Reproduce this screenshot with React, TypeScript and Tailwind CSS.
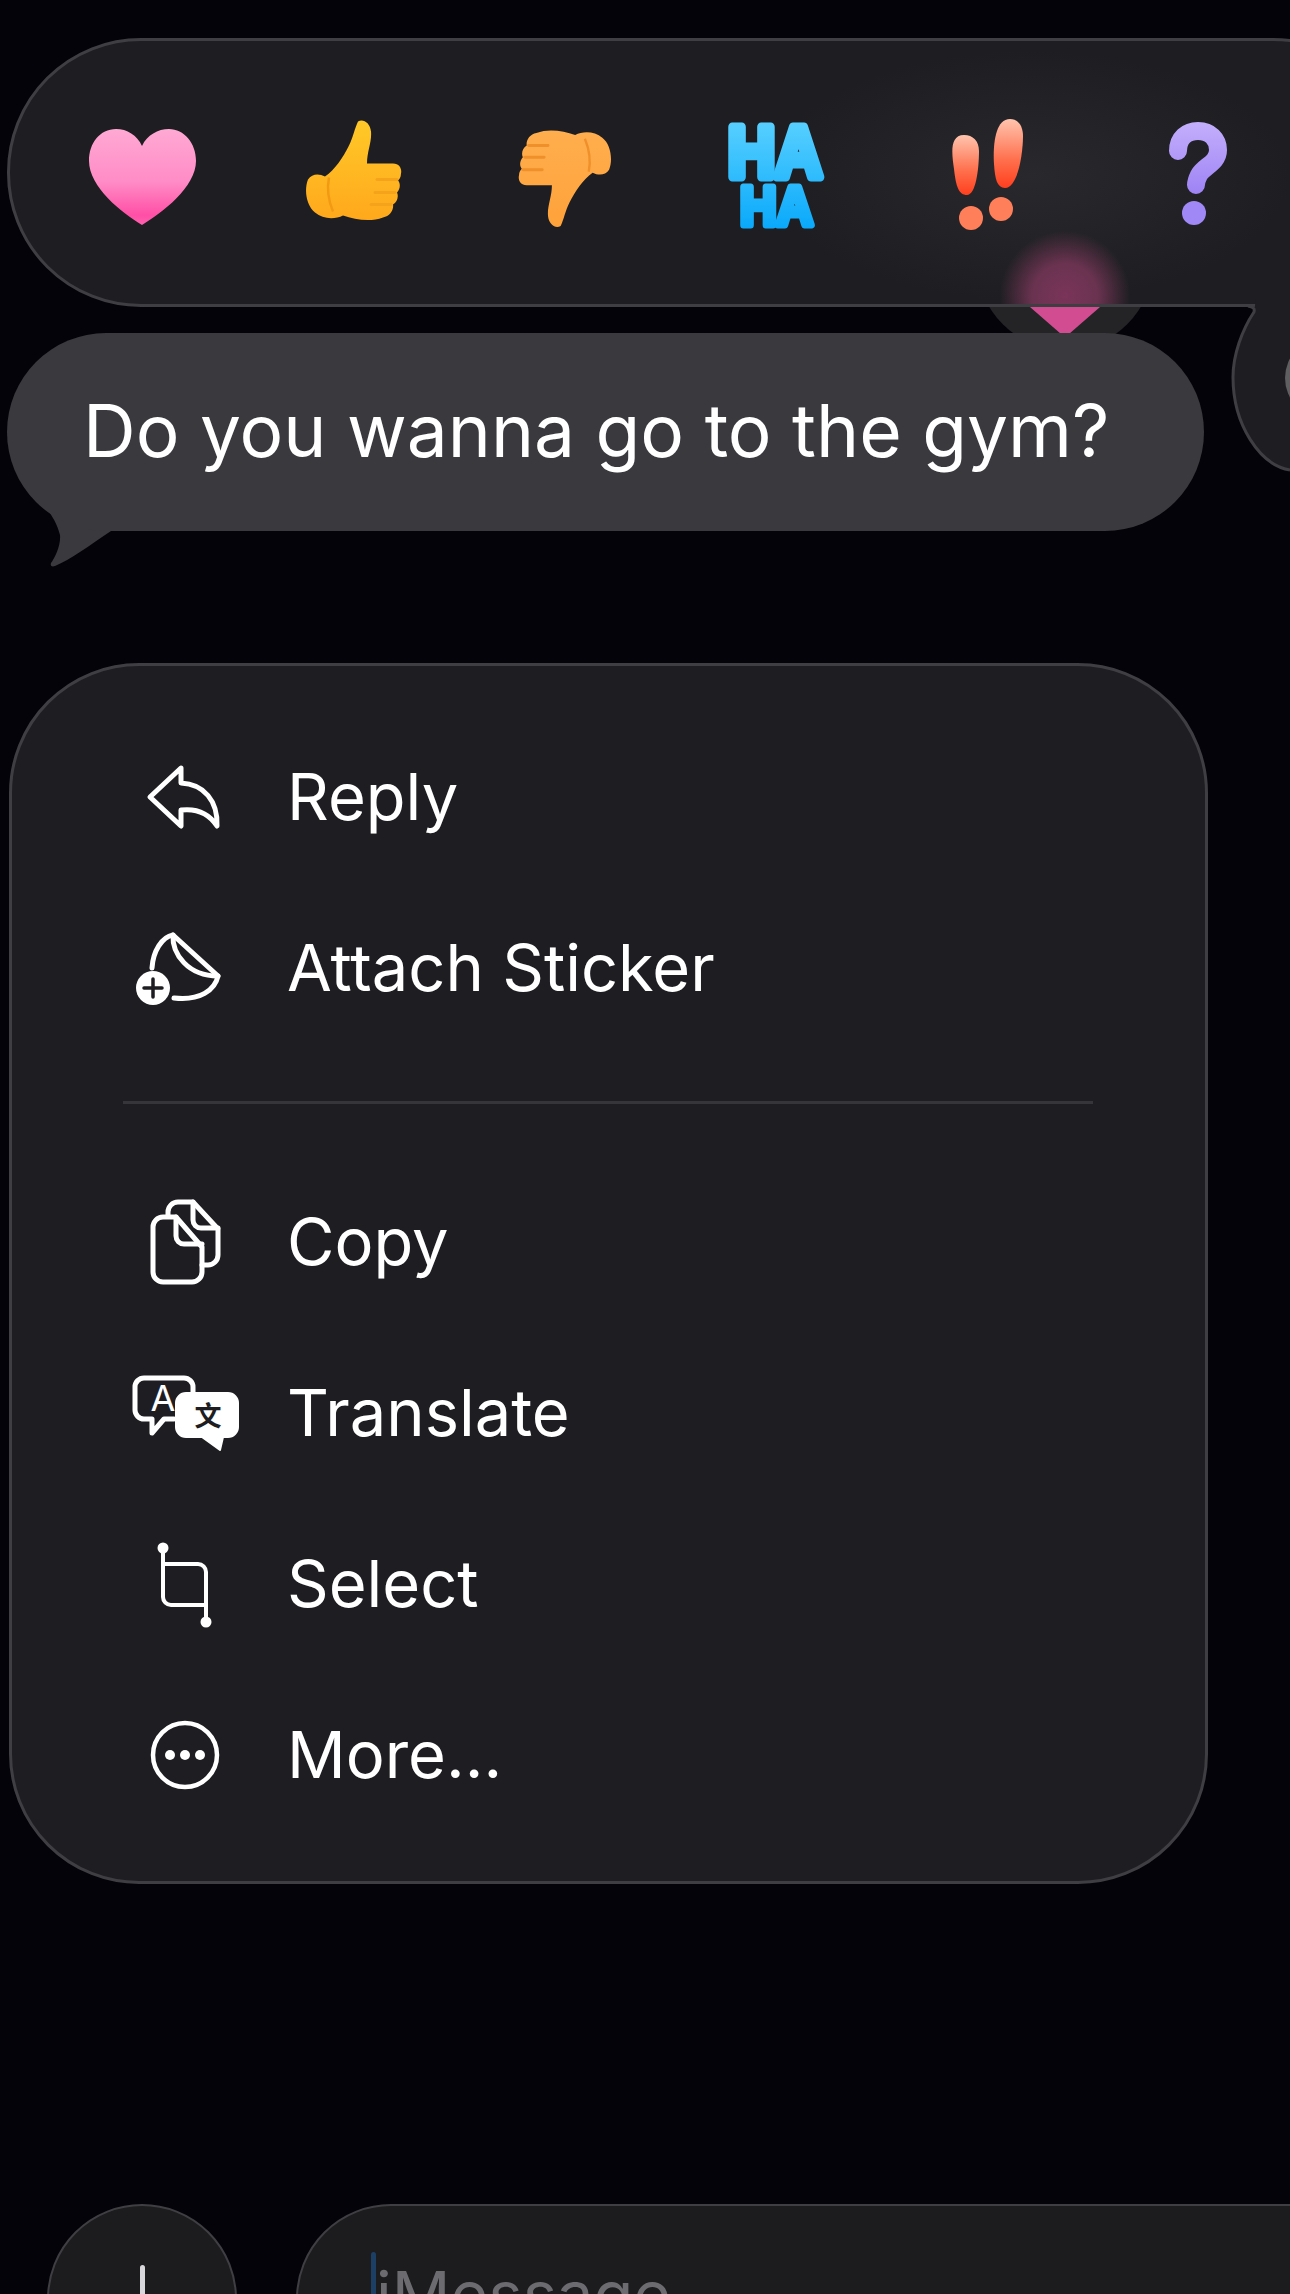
import type { ReactNode } from "react";

const font = { fontFamily: "Inter, 'Noto Sans', sans-serif" };

// reaction emojis -------------------------------------------------
const HAND =
  "M53 2 C58 -1 65 3 66 12 C67 22 62 32 62 44 L88 44 C95 44 97 50 96 54 C96 58 94 60 93 61 C96 64 95 70 92 73 C94 77 92 83 88 85 C89 90 85 97 78 98 C65 103 50 100 38 96 C30 100 18 100 10 93 C1 86 -1 70 3 60 C7 54 14 54 20 57 C30 50 38 38 44 26 C48 18 50 8 53 2Z";

const Heart = () => (
  <svg width="107" height="96" viewBox="0 0 107 96" className="mt-[8px]">
    <defs>
      <linearGradient id="heartFill" x1="0" y1="0" x2="0" y2="1">
        <stop offset="0" stopColor="#ffa9d4" />
        <stop offset="0.55" stopColor="#ff8cc6" />
        <stop offset="0.9" stopColor="#ff4fa6" />
        <stop offset="1" stopColor="#ff62b0" />
      </linearGradient>
    </defs>
    <path
      d="M53 17 C48 6 38 0 27 0 C11 0 0 14 0 32 C0 58 33 84 53 96 C73 84 107 58 107 32 C107 14 95 0 80 0 C69 0 58 6 53 17 Z"
      fill="url(#heartFill)"
    />
  </svg>
);

const ThumbUp = () => (
  <svg width="97" height="105" viewBox="0 0 97 102" className="mb-[4px]">
    <defs>
      <linearGradient id="thumbFill" x1="0" y1="0" x2="0" y2="1">
        <stop offset="0" stopColor="#ffc928" />
        <stop offset="1" stopColor="#ffa81c" />
      </linearGradient>
    </defs>
    <path d={HAND} fill="url(#thumbFill)" />
    <path d="M24 58 C22 68 23 80 28 92" stroke="#f29a14" strokeWidth="2.5" fill="none" />
    <path d="M72 60 H92 M70 73 H90 M66 85 H86" stroke="#f5a31a" strokeWidth="3" strokeLinecap="round" fill="none" />
  </svg>
);

const ThumbDown = () => (
  <svg width="94" height="103" viewBox="0 0 97 102" className="mt-[12px] rotate-180">
    <defs>
      <linearGradient id="downFill" x1="0" y1="0" x2="0" y2="1">
        <stop offset="0" stopColor="#ffa23a" />
        <stop offset="1" stopColor="#ffae4e" />
      </linearGradient>
    </defs>
    <path d={HAND} fill="url(#downFill)" />
    <path d="M24 58 C22 68 23 80 28 92" stroke="#f0902a" strokeWidth="2.5" fill="none" />
    <path d="M72 60 H92 M70 73 H90 M66 85 H86" stroke="#f0902a" strokeWidth="3" strokeLinecap="round" fill="none" />
  </svg>
);

const HaHa = () => (
  <svg width="106" height="150" viewBox="0 0 106 150" className="mt-[6px]">
    <defs>
      <linearGradient id="hahaFill" gradientUnits="userSpaceOnUse" x1="0" y1="20" x2="0" y2="130">
        <stop offset="0" stopColor="#58d0ff" />
        <stop offset="1" stopColor="#08a8fb" />
      </linearGradient>
    </defs>
    <g
      fill="url(#hahaFill)"
      stroke="url(#hahaFill)"
      strokeLinejoin="round"
      fontFamily="'Liberation Sans', sans-serif"
      fontWeight="700"
    >
      <text x="5" y="76" fontSize="72" strokeWidth="9" textLength="94" lengthAdjust="spacingAndGlyphs">
        HA
      </text>
      <text x="17" y="124" fontSize="56" strokeWidth="7" textLength="73" lengthAdjust="spacingAndGlyphs">
        HA
      </text>
    </g>
  </svg>
);

const Bang = () => (
  <svg width="73" height="111" viewBox="0 0 73 111" className="mt-[4px]">
    <defs>
      <linearGradient id="bangFill" x1="0" y1="0" x2="0" y2="1">
        <stop offset="0" stopColor="#ffc4ae" />
        <stop offset="0.6" stopColor="#ff6f4c" />
        <stop offset="1" stopColor="#ff3f1e" />
      </linearGradient>
    </defs>
    <path d="M14 16 C23 16 29 22 29 32 C29 50 26 76 17 76 C9 76 6 68 4 50 C2 36 -1 16 14 16Z" fill="url(#bangFill)" />
    <path d="M60 0 C69 0 73 8 73 17 C73 34 68 69 55 69 C47 69 45 60 44 45 C43 30 44 0 60 0Z" fill="url(#bangFill)" />
    <circle cx="21" cy="99" r="12" fill="#ff7f5a" />
    <circle cx="51" cy="90" r="12" fill="#ff7f5a" />
  </svg>
);

const Question = () => (
  <svg width="59" height="103" viewBox="0 0 59 103" className="mt-[2px]">
    <defs>
      <linearGradient id="questionFill" gradientUnits="userSpaceOnUse" x1="0" y1="0" x2="0" y2="100">
        <stop offset="0" stopColor="#c3affc" />
        <stop offset="1" stopColor="#8f72f2" />
      </linearGradient>
    </defs>
    <path
      d="M10 29 C10 16 19 9 30 9 C42 9 50 17 50 28 C50 41 36 44 31 53 C29 57 28 60 28 63"
      stroke="url(#questionFill)"
      strokeWidth="18"
      strokeLinecap="round"
      fill="none"
    />
    <circle cx="26" cy="91" r="12" fill="#a088f6" />
  </svg>
);

// menu icons, all on a 110x90 box ----------------------------------
const icon = (children: ReactNode) => (
  <svg
    width="110"
    height="90"
    viewBox="0 0 110 90"
    fill="none"
    stroke="#fff"
    strokeLinecap="round"
    strokeLinejoin="round"
    className="shrink-0 overflow-visible"
  >
    {children}
  </svg>
);

const ReplyIcon = () =>
  icon(<path strokeWidth="5" d="M51 15 L20 44 L51 73 V57 C68 55 80 62 87 73 C88 48 74 31 51 30 Z" />);

const StickerIcon = () =>
  icon(
    <>
      <path strokeWidth="5" d="M22 44 C23 27 32 13 43 11 L88 52 C85 66 70 77 44 74" />
      <path strokeWidth="5" d="M43 11 C42 30 58 52 88 52" />
      <circle cx="23" cy="64" r="17" fill="#fff" stroke="none" />
      <path strokeWidth="3.5" stroke="#1e1e22" d="M23 55 V73 M14 64 H32" />
    </>,
  );

const CopyIcon = () =>
  icon(
    <g strokeWidth="5">
      <path d="M33 19 H46 L72 49 V74 A10 10 0 0 1 62 84 H33 A10 10 0 0 1 23 74 V29 A10 10 0 0 1 33 19 Z" />
      <path d="M46 19 V38 A8 8 0 0 0 54 46 H72" />
      <path d="M38 17 V14 A10 10 0 0 1 48 4 H63 L88 31 V57 A10 10 0 0 1 78 67 H72" />
      <path d="M63 4 V22 A8 8 0 0 0 71 30 H88" />
    </g>,
  );

const TranslateIcon = () =>
  icon(
    <>
      <path
        strokeWidth="5"
        d="M63 24 V18 A9 9 0 0 0 54 9 H14 A9 9 0 0 0 5 18 V41 A9 9 0 0 0 14 50 H22 V64 L34 50 H44"
      />
      <text
        x="33"
        y="42"
        fill="#fff"
        stroke="none"
        fontSize="36"
        textAnchor="middle"
        fontFamily="Inter, sans-serif"
      >
        A
      </text>
      <path
        fill="#fff"
        strokeWidth="2"
        d="M56 24 H98 A10 10 0 0 1 108 34 V58 A10 10 0 0 1 98 68 H93 L90 81 L72 68 H56 A10 10 0 0 1 46 58 V34 A10 10 0 0 1 56 24 Z"
      />
      <text
        x="78"
        y="57"
        fill="#1e1e22"
        stroke="none"
        fontSize="27"
        fontWeight="700"
        textAnchor="middle"
        fontFamily="'Noto Sans CJK SC', sans-serif"
      >
        文
      </text>
    </>,
  );

const SelectIcon = () =>
  icon(
    <>
      <path strokeWidth="4" d="M33 8 V57 A8 8 0 0 0 41 65 H76 M33 24 H68 A8 8 0 0 1 76 32 V82" />
      <circle cx="33" cy="8" r="5.5" fill="#fff" stroke="none" />
      <circle cx="76" cy="82" r="5.5" fill="#fff" stroke="none" />
    </>,
  );

const MoreIcon = () =>
  icon(
    <>
      <circle cx="55" cy="44" r="32" strokeWidth="4.5" />
      <circle cx="40" cy="44" r="5" fill="#fff" stroke="none" />
      <circle cx="55" cy="44" r="5" fill="#fff" stroke="none" />
      <circle cx="70" cy="44" r="5" fill="#fff" stroke="none" />
    </>,
  );

const MenuRow = ({ label, children }: { label: string; children: ReactNode }) => (
  <div className="flex h-[171px] items-center">
    {children}
    <span className="mb-[3px] ml-[47px] text-[65px] leading-none text-white">{label}</span>
  </div>
);

export default function App() {
  return (
    <div
      style={font}
      className="flex h-[2294px] w-[1290px] flex-col overflow-hidden bg-[#030309] pt-[38px]"
    >
      {/* reactions bar */}
      <div className="relative ml-[7px] h-[269px] w-[1400px] shrink-0">
        <div className="relative flex h-full items-center overflow-hidden rounded-[134px] border-[3px] border-[#3f3f43] bg-[#1e1e22] pl-[27px]">
          <div className="absolute left-[760px] top-[10px] h-[250px] w-[520px] bg-[radial-gradient(closest-side,#29282c_0%,#29282c00_100%)]" />
          <div className="absolute left-[990px] top-[190px] h-[130px] w-[130px] bg-[radial-gradient(closest-side,#7a3459_0%,#6a3350_50%,#6a335000_100%)]" />
          {[<Heart />, <ThumbUp />, <ThumbDown />, <HaHa />, <Bang />, <Question />].map((emoji, i) => (
            <div key={i} className="relative flex w-[211px] shrink-0 justify-center">
              {emoji}
            </div>
          ))}
        </div>
        {/* tail running to the next reaction */}
        <svg width="70" height="200" viewBox="0 0 70 200" className="absolute left-[1213px] top-[257px]">
          <path d="M36 4 H70 V175 C40 170 13 130 13 82 C13 60 22 35 34 17 Z" fill="#1e1e22" />
          <path
            d="M70 175 C40 170 13 130 13 82 C13 60 22 35 34 17 C35 13 33 12 28 11"
            fill="none"
            stroke="#3f3f43"
            strokeWidth="3"
          />
          <circle cx="105" cy="83" r="40" fill="#5f5f62" />
        </svg>
      </div>

      {/* message bubble */}
      <div className="relative ml-[7px] mt-[26px] h-[198px] w-[1197px] shrink-0">
        <div className="absolute left-[970px] top-[-26px] h-[30px] w-[176px] overflow-hidden">
          <div className="absolute left-0 top-[-133px] h-[176px] w-[176px] rounded-full bg-[#242427]" />
          <svg width="176" height="30" viewBox="0 0 176 30" className="absolute left-0 top-0">
            <path d="M53 0 H123 L92 27 Q88 30 84 27 Z" fill="#d24c92" />
          </svg>
        </div>
        <svg width="90" height="90" viewBox="0 0 90 90" className="absolute left-[23px] top-[147px]">
          <path
            d="M5 10 C12 25 25 35 30 55 C31 65 25 78 21 83 C20 86 22 87 25 86 C40 80 60 65 81 51 L81 0 L5 0 Z"
            fill="#3a3a3e"
          />
        </svg>
        <div className="relative flex h-full items-center rounded-[99px] bg-[#3a3a3e] pl-[76px]">
          <span className="mb-[3px] whitespace-nowrap text-[73px] leading-none text-white">
            Do you wanna go to the gym?
          </span>
        </div>
      </div>

      {/* context menu */}
      <div className="ml-[9px] mt-[132px] h-[1221px] w-[1199px] shrink-0 rounded-[130px] border-[3px] border-[#3f3f43] bg-[#1e1e22] pl-[118px] pt-[46px]">
        <MenuRow label="Reply">
          <ReplyIcon />
        </MenuRow>
        <MenuRow label="Attach Sticker">
          <StickerIcon />
        </MenuRow>
        <div className="mb-[53px] ml-[-7px] mt-[47px] h-[3px] w-[970px] bg-[#36363a]" />
        <MenuRow label="Copy">
          <CopyIcon />
        </MenuRow>
        <MenuRow label="Translate">
          <TranslateIcon />
        </MenuRow>
        <MenuRow label="Select">
          <SelectIcon />
        </MenuRow>
        <MenuRow label="More...">
          <MoreIcon />
        </MenuRow>
      </div>

      {/* compose row, runs past the screen edge */}
      <div className="mt-[320px] flex shrink-0 pl-[47px]">
        <div className="flex h-[190px] w-[190px] shrink-0 justify-center rounded-full border-2 border-[#3f3f43] bg-[#1c1c1f] pt-[59px]">
          <div className="h-[80px] w-[5px] rounded-full bg-[#d8d8dc]" />
        </div>
        <div className="relative ml-[59px] h-[190px] w-[1100px] shrink-0 rounded-[100px] border-2 border-[#3f3f43] bg-[#1c1c1f] pl-[78px] pt-[56px]">
          <div className="absolute left-[73px] top-[46px] h-[90px] w-[5px] rounded-full bg-[#1c3f66]" />
          <span className="text-[65px] leading-none text-[#6c6c70]">iMessage</span>
        </div>
      </div>
    </div>
  );
}
